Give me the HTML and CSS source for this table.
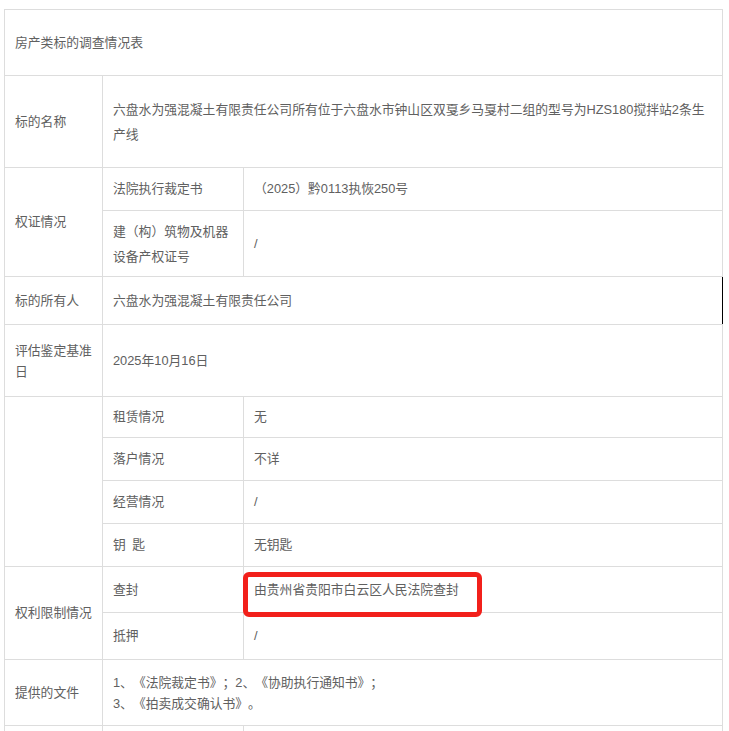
FILE: index.html
```html
<!DOCTYPE html>
<html lang="zh-CN">
<head>
    <meta charset="UTF-8">
    <title>房产类标的调查情况表</title>
    <link rel="stylesheet" href="styles.css">
</head>
<body>

    <table class="survey-table">
        <colgroup>
            <col class="col-label">
            <col class="col-item">
            <col class="col-value">
        </colgroup>
        <tr class="row-title">
            <td colspan="3">房产类标的调查情况表</td>
        </tr>
        <tr class="row-name">
            <td>标的名称</td>
            <td colspan="2" class="wide">六盘水为强混凝土有限责任公司所有位于六盘水市钟山区双戛乡马戛村二组的型号为HZS180搅拌站2条生产线</td>
        </tr>
        <tr class="row-single">
            <td rowspan="2">权证情况</td>
            <td>法院执行裁定书</td>
            <td>（2025）黔0113执恢250号</td>
        </tr>
        <tr class="row-double">
            <td class="wide">建（构）筑物及机器设备产权证号</td>
            <td>/</td>
        </tr>
        <tr class="row-owner">
            <td>标的所有人</td>
            <td colspan="2" class="marked">六盘水为强混凝土有限责任公司</td>
        </tr>
        <tr class="row-date">
            <td class="tight">评估鉴定基准日</td>
            <td colspan="2">2025年10月16日</td>
        </tr>
        <tr class="row-small">
            <td rowspan="4"></td>
            <td>租赁情况</td>
            <td>无</td>
        </tr>
        <tr class="row-single">
            <td>落户情况</td>
            <td>不详</td>
        </tr>
        <tr class="row-single">
            <td>经营情况</td>
            <td>/</td>
        </tr>
        <tr class="row-single">
            <td>钥&ensp;匙</td>
            <td>无钥匙</td>
        </tr>
        <tr class="row-seal">
            <td rowspan="2">权利限制情况</td>
            <td>查封</td>
            <td class="highlight">由贵州省贵阳市白云区人民法院查封<span class="red-box"></span></td>
        </tr>
        <tr class="row-mortgage">
            <td>抵押</td>
            <td>/</td>
        </tr>
        <tr class="row-files">
            <td>提供的文件</td>
            <td colspan="2" class="tight">1、《法院裁定书》；2、《协助执行通知书》；<br>3、《拍卖成交确认书》。</td>
        </tr>
        <tr class="row-single">
            <td></td>
            <td></td>
            <td></td>
        </tr>
    </table>

</body>
</html>
```

FILE: styles.css
```css
/* Reset */
* {
    box-sizing: border-box;
    margin: 0;
    padding: 0;
}

body {
    font-family: "Liberation Sans", "Noto Sans CJK SC", sans-serif;
    font-size: 12.8px;
    color: #606060;
    background-color: #FFFFFF;
    padding: 9px 0 0 4px;
    overflow: hidden;
    text-spacing-trim: space-all;
}

/* Table */
.survey-table {
    border-collapse: collapse;
    table-layout: fixed;
    width: 719px;
}

.col-label {
    width: 98px;
}

.col-item {
    width: 141px;
}

.survey-table td {
    border: 1px solid #dddddd;
    padding: 0 6px 0 10px;
    vertical-align: middle;
    line-height: 24px;
    word-break: break-all;
}

.survey-table td.wide {
    line-height: 25px;
    padding-right: 12px;
}

.survey-table td.tight {
    line-height: 21px;
}

/* Row heights */
.row-title { height: 66px; }
.row-name { height: 92px; }
.row-single { height: 43px; }
.row-small { height: 41px; }
.row-double { height: 66px; }
.row-owner { height: 48px; }
.row-date { height: 72px; }
.row-seal { height: 46px; }
.row-mortgage { height: 47px; }
.row-files { height: 66px; }

.survey-table td.marked {
    border-right: 1px solid #000000;
}

/* Red highlight box */
.highlight {
    position: relative;
}

.red-box {
    position: absolute;
    left: -1px;
    top: 5px;
    width: 239px;
    height: 45px;
    border: 5px solid #f2201b;
    border-radius: 6px;
}
```
